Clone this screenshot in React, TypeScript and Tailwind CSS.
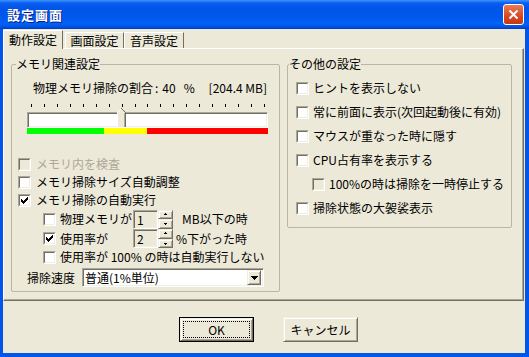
import React from "react";

const SUNKEN =
  "border border-t-[#ACA899] border-l-[#ACA899] border-r-white border-b-white shadow-[inset_1px_1px_0_#716F64,inset_-1px_-1px_0_#F1EFE2]";
const RAISED =
  "border border-t-[#F1EFE2] border-l-[#F1EFE2] border-r-[#716F64] border-b-[#716F64] shadow-[inset_1px_1px_0_white,inset_-1px_-1px_0_#ACA899]";

function CheckBox({ checked = false, disabled = false }: { checked?: boolean; disabled?: boolean }) {
  return (
    <span className="flex w-[13px] h-[13px] shrink-0 border border-t-[#ACA899] border-l-[#ACA899] border-r-white border-b-white">
      <span
        className={
          "flex flex-1 items-center justify-center border border-t-[#716F64] border-l-[#716F64] border-r-[#F1EFE2] border-b-[#F1EFE2] " +
          (disabled ? "bg-[#ECE9D8]" : "bg-white")
        }
      >
        {checked && (
          <svg width="7" height="7" viewBox="0 0 7 7" shapeRendering="crispEdges">
            <rect x="6" y="0" width="1" height="1" />
            <rect x="5" y="1" width="2" height="1" />
            <rect x="0" y="2" width="1" height="1" />
            <rect x="4" y="2" width="3" height="1" />
            <rect x="0" y="3" width="2" height="1" />
            <rect x="3" y="3" width="3" height="1" />
            <rect x="0" y="4" width="5" height="1" />
            <rect x="1" y="5" width="3" height="1" />
            <rect x="2" y="6" width="1" height="1" />
          </svg>
        )}
      </span>
    </span>
  );
}

function Arrow({ up }: { up?: boolean }) {
  return (
    <svg width="5" height="3" viewBox="0 0 5 3" shapeRendering="crispEdges">
      {up ? (
        <>
          <rect x="2" y="0" width="1" height="1" />
          <rect x="1" y="1" width="3" height="1" />
        </>
      ) : (
        <>
          <rect x="1" y="1" width="3" height="1" />
          <rect x="2" y="2" width="1" height="1" />
        </>
      )}
    </svg>
  );
}

function Spin({ value }: { value: string }) {
  return (
    <span className="flex h-[19px]">
      <span className={"w-[25px] bg-[#ECE9D8] pl-[3px] leading-[17px] " + SUNKEN}>{value}</span>
      <span className="flex flex-col w-[15px]">
        <span className={"flex-1 flex items-center justify-center bg-[#ECE9D8] " + RAISED}>
          <Arrow up />
        </span>
        <span className={"flex-1 flex items-center justify-center bg-[#ECE9D8] " + RAISED}>
          <Arrow />
        </span>
      </span>
    </span>
  );
}

function Row({ children, className }: { children: React.ReactNode; className: string }) {
  return <div className={"flex items-center leading-[12px] " + className}>{children}</div>;
}

export default function App() {
  return (
    <div className="w-[529px] h-[357px] flex flex-col bg-[#0055EA] font-['Noto_Sans_CJK_JP',sans-serif] text-[12px] text-black">
      {/* title bar */}
      <div className="h-[29px] shrink-0 flex items-center justify-between pl-[7px] pr-[5px] bg-[linear-gradient(to_bottom,#3D95FF_0px,#0A5FF0_3px,#0055E8_8px,#0058EC_18px,#0062F6_24px,#0050E0_27px,#003DC4_29px)]">
        <span className="text-white font-bold text-[13px] leading-[14px] tracking-[1px] [text-shadow:1px_1px_0_#0A1E8C]">
          設定画面
        </span>
        <span className="w-[21px] h-[21px] flex items-center justify-center rounded-[3px] border border-white bg-[linear-gradient(to_bottom,#E87A56,#D8471F_60%,#C23A14)]">
          <svg width="11" height="11" viewBox="0 0 11 11">
            <path d="M1.5 1.5L9.5 9.5M9.5 1.5L1.5 9.5" stroke="white" strokeWidth="2" />
          </svg>
        </span>
      </div>

      {/* body */}
      <div className="flex-1 ml-[3px] mr-[4px] mb-[4px] bg-[#ECE9D8] flex flex-col">
        {/* tabs */}
        <div className="relative z-10 flex items-end h-[19px] mt-px -mb-px">
          <div className="w-[60px] h-[19px] flex items-center justify-center bg-[#ECE9D8] border-l border-t border-white border-r border-r-[#716F64] rounded-tl-[2px] leading-[12px]">
            動作設定
          </div>
          <div className="ml-[2px] mb-px w-[59px] h-[16px] flex items-center justify-center border-l border-t border-white border-r border-r-[#716F64] leading-[12px]">
            画面設定
          </div>
          <div className="mb-px w-[60px] h-[16px] flex items-center justify-center border-l border-t border-white border-r border-r-[#716F64] leading-[12px]">
            音声設定
          </div>
        </div>

        {/* panel */}
        <div className="h-[253px] mr-px flex items-start gap-[7px] pl-[7px] pt-[9px] border border-t-white border-l-white border-r-[#716F64] border-b-[#716F64] shadow-[inset_-1px_-1px_0_#ACA899]">
          <fieldset className="w-[269px] h-[234px] border border-[#BAB6A6] rounded-[2px]">
            <legend className="ml-[4px] leading-[12px]">メモリ関連設定</legend>
            <div className="flex flex-col">
              <div className="mt-[12px] ml-[21px] w-[234px] h-[12px] flex items-center leading-[12px]">
                <span>物理メモリ掃除の割合</span>
                <span className="ml-[2px]">:</span>
                <span className="ml-[4px]">40</span>
                <span className="ml-[8px]">%</span>
                <span className="ml-auto">[204.4 MB]</span>
              </div>
              <div className="mt-[10px] ml-[19px] w-[234px] h-[3px] flex justify-between">
                {Array.from({ length: 19 }).map((_, i) => (
                  <span key={i} className="w-px h-full bg-black" />
                ))}
              </div>
              <div className={"relative mt-[5px] ml-[15px] w-[241px] h-[16px] bg-white " + SUNKEN}>
                <svg className="absolute left-[89px] -top-[5px]" width="9" height="19" viewBox="0 0 9 19" shapeRendering="crispEdges">
                  <path d="M0 4L4 0L8 4V19H0Z" fill="#ECE9D8" />
                  <path d="M0.5 19V4.5L4.5 0.5" stroke="white" fill="none" />
                  <path d="M4.5 0.5L8.5 4.5V19" stroke="#716F64" fill="none" />
                  <path d="M7.5 5V19" stroke="#ACA899" fill="none" />
                </svg>
              </div>
              <div className="ml-[15px] w-[241px] h-[6px] flex">
                <span className="w-[77px] bg-[#00FF00]" />
                <span className="w-[43px] bg-[#FFFF00]" />
                <span className="flex-1 bg-[#FF0000]" />
              </div>

              <Row className="mt-[21px] ml-[6px] h-[18px] gap-[5px] text-[#ACA899]">
                <CheckBox disabled />
                <span>メモリ内を検査</span>
              </Row>
              <Row className="ml-[6px] h-[18px] gap-[5px]">
                <CheckBox />
                <span>メモリ掃除サイズ自動調整</span>
              </Row>
              <Row className="ml-[6px] h-[18px] gap-[5px]">
                <CheckBox checked />
                <span>メモリ掃除の自動実行</span>
              </Row>
              <Row className="ml-[31px] h-[20px]">
                <CheckBox />
                <span className="ml-[4px] w-[73px]">物理メモリが</span>
                <Spin value="1" />
                <span className="ml-[9px]">MB以下の時</span>
              </Row>
              <Row className="ml-[31px] h-[19px]">
                <CheckBox checked />
                <span className="ml-[4px] w-[73px]">使用率が</span>
                <Spin value="2" />
                <span className="ml-[3px]">%下がった時</span>
              </Row>
              <Row className="ml-[31px] h-[18px] gap-[4px]">
                <CheckBox />
                <span>使用率が 100% の時は自動実行しない</span>
              </Row>
              <Row className="mt-[2px] ml-[15px] h-[19px]">
                <span className="w-[55px]">掃除速度</span>
                <span className={"w-[182px] h-[19px] flex items-center bg-white pl-[2px] pr-[2px] " + SUNKEN}>
                  <span className="flex-1">普通(1%単位)</span>
                  <span className={"w-[14px] h-[15px] flex items-center justify-center bg-[#ECE9D8] " + RAISED}>
                    <svg width="7" height="4" viewBox="0 0 7 4" shapeRendering="crispEdges">
                      <path d="M0 0H7L3.5 4Z" />
                    </svg>
                  </span>
                </span>
              </Row>
            </div>
          </fieldset>

          <fieldset className="w-[225px] h-[170px] border border-[#BAB6A6] rounded-[2px]">
            <legend className="ml-[1px] leading-[12px]">その他の設定</legend>
            <div className="flex flex-col mt-[6px]">
              <Row className="ml-[8px] h-[24px] gap-[4px]">
                <CheckBox />
                <span>ヒントを表示しない</span>
              </Row>
              <Row className="ml-[8px] h-[24px] gap-[4px]">
                <CheckBox />
                <span>常に前面に表示(次回起動後に有効)</span>
              </Row>
              <Row className="ml-[8px] h-[24px] gap-[4px]">
                <CheckBox />
                <span>マウスが重なった時に隠す</span>
              </Row>
              <Row className="ml-[8px] h-[24px] gap-[4px]">
                <CheckBox />
                <span>CPU占有率を表示する</span>
              </Row>
              <Row className="ml-[24px] h-[24px] gap-[4px]">
                <CheckBox disabled />
                <span>100%の時は掃除を一時停止する</span>
              </Row>
              <Row className="ml-[8px] h-[24px] gap-[4px]">
                <CheckBox />
                <span>掃除状態の大袈裟表示</span>
              </Row>
            </div>
          </fieldset>
        </div>

        {/* buttons */}
        <div className="mt-[16px] flex pl-[176px] gap-[29px]">
          <button className="w-[75px] h-[25px] flex border border-black bg-[#ECE9D8] p-0">
            <span className={"flex-1 flex p-[2px] " + RAISED}>
              <span className="flex-1 flex items-center justify-center border border-dotted border-black leading-[12px]">
                OK
              </span>
            </span>
          </button>
          <button className={"w-[75px] h-[25px] flex items-center justify-center bg-[#ECE9D8] leading-[12px] " + RAISED}>
            キャンセル
          </button>
        </div>
      </div>
    </div>
  );
}
